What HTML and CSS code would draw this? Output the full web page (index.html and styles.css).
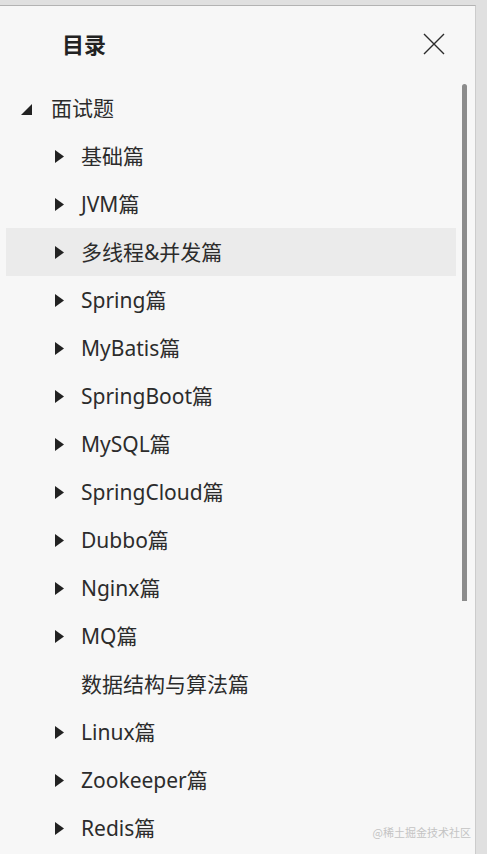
FILE: index.html
```html
<!DOCTYPE html>
<html lang="zh">
<head>
<meta charset="utf-8">
<link rel="stylesheet" href="styles.css">
</head>
<body>
<div class="page">
  <div class="panel">
    <div class="header">
      <h1 class="title">目录</h1>
      <svg class="close" width="22" height="22" viewBox="0 0 22 22"><path d="M1 1L21 21M21 1L1 21" stroke="#2b2b2b" stroke-width="1.4" fill="none"/></svg>
    </div>
    <div class="body">
      <ul class="tree">
        <li class="row lvl1"><span class="caret"><svg width="12" height="11" viewBox="0 0 12 11"><polygon points="11,0 11,11 0,11" fill="#222"/></svg></span><span class="label">面试题</span></li>
        <li class="row lvl2"><span class="caret"><svg width="9" height="13" viewBox="0 0 9 13"><polygon points="0,0 9,6.5 0,13" fill="#222"/></svg></span><span class="label">基础篇</span></li>
        <li class="row lvl2"><span class="caret"><svg width="9" height="13" viewBox="0 0 9 13"><polygon points="0,0 9,6.5 0,13" fill="#222"/></svg></span><span class="label">JVM篇</span></li>
        <li class="row lvl2 active"><span class="caret"><svg width="9" height="13" viewBox="0 0 9 13"><polygon points="0,0 9,6.5 0,13" fill="#222"/></svg></span><span class="label">多线程&amp;并发篇</span></li>
        <li class="row lvl2"><span class="caret"><svg width="9" height="13" viewBox="0 0 9 13"><polygon points="0,0 9,6.5 0,13" fill="#222"/></svg></span><span class="label">Spring篇</span></li>
        <li class="row lvl2"><span class="caret"><svg width="9" height="13" viewBox="0 0 9 13"><polygon points="0,0 9,6.5 0,13" fill="#222"/></svg></span><span class="label">MyBatis篇</span></li>
        <li class="row lvl2"><span class="caret"><svg width="9" height="13" viewBox="0 0 9 13"><polygon points="0,0 9,6.5 0,13" fill="#222"/></svg></span><span class="label">SpringBoot篇</span></li>
        <li class="row lvl2"><span class="caret"><svg width="9" height="13" viewBox="0 0 9 13"><polygon points="0,0 9,6.5 0,13" fill="#222"/></svg></span><span class="label">MySQL篇</span></li>
        <li class="row lvl2"><span class="caret"><svg width="9" height="13" viewBox="0 0 9 13"><polygon points="0,0 9,6.5 0,13" fill="#222"/></svg></span><span class="label">SpringCloud篇</span></li>
        <li class="row lvl2"><span class="caret"><svg width="9" height="13" viewBox="0 0 9 13"><polygon points="0,0 9,6.5 0,13" fill="#222"/></svg></span><span class="label">Dubbo篇</span></li>
        <li class="row lvl2"><span class="caret"><svg width="9" height="13" viewBox="0 0 9 13"><polygon points="0,0 9,6.5 0,13" fill="#222"/></svg></span><span class="label">Nginx篇</span></li>
        <li class="row lvl2"><span class="caret"><svg width="9" height="13" viewBox="0 0 9 13"><polygon points="0,0 9,6.5 0,13" fill="#222"/></svg></span><span class="label">MQ篇</span></li>
        <li class="row lvl2"><span class="caret"></span><span class="label">数据结构与算法篇</span></li>
        <li class="row lvl2"><span class="caret"><svg width="9" height="13" viewBox="0 0 9 13"><polygon points="0,0 9,6.5 0,13" fill="#222"/></svg></span><span class="label">Linux篇</span></li>
        <li class="row lvl2"><span class="caret"><svg width="9" height="13" viewBox="0 0 9 13"><polygon points="0,0 9,6.5 0,13" fill="#222"/></svg></span><span class="label">Zookeeper篇</span></li>
        <li class="row lvl2"><span class="caret"><svg width="9" height="13" viewBox="0 0 9 13"><polygon points="0,0 9,6.5 0,13" fill="#222"/></svg></span><span class="label">Redis篇</span></li>
      </ul>
      <div class="scrollbar"><div class="thumb"></div></div>
    </div>
    <div class="watermark">@稀土掘金技术社区</div>
  </div>
</div>
</body>
</html>
```

FILE: styles.css
```css
* { box-sizing: border-box; }
html, body {
  margin: 0;
  padding: 0;
  height: 100%;
  overflow: hidden;
}
body {
  background: #e0e0e0;
  font-family: "Noto Sans", "Noto Sans CJK SC", sans-serif;
  color: #2a2a2a;
}
.page {
  padding-top: 5px;
  height: 100%;
}
.panel {
  position: relative;
  width: 476px;
  height: 849px;
  background: #f7f7f7;
  border-top: 1px solid #b3b3b3;
  border-right: 1px solid #cccccc;
}
.header {
  height: 78px;
  display: flex;
  align-items: center;
  justify-content: space-between;
  padding: 0 30px 0 62px;
}
.title {
  margin: 0;
  font-size: 22px;
  font-weight: 700;
  color: #222;
  line-height: 1;
  font-family: "Noto Sans CJK SC", sans-serif;
  margin-top: -4px;
}
.close {
  display: block;
  margin-top: -2px;
}
.body {
  display: flex;
  align-items: flex-start;
}
.tree {
  list-style: none;
  margin: 0 0 0 6px;
  padding: 0;
  width: 450px;
}
.row {
  height: 48px;
  display: flex;
  align-items: center;
  font-size: 21px;
  color: #2c2c2c;
}
.row.active {
  background: #ebebeb;
}
.caret {
  display: flex;
  align-items: center;
}
.lvl1 .caret {
  width: 45px;
  padding-left: 15px;
  margin-top: 2px;
}
.lvl2 .caret {
  width: 75px;
  padding-left: 49px;
}
.label {
  white-space: nowrap;
  line-height: 1;
}
.scrollbar {
  margin-left: 6px;
  width: 5px;
}
.thumb {
  width: 5px;
  height: 517px;
  background: #8c8c8c;
  border-radius: 3px 3px 0 0;
}
.watermark {
  position: absolute;
  right: 4px;
  bottom: 14px;
  font-size: 11px;
  color: #c4c4c4;
  font-family: "Noto Sans CJK SC", sans-serif;
}
```
